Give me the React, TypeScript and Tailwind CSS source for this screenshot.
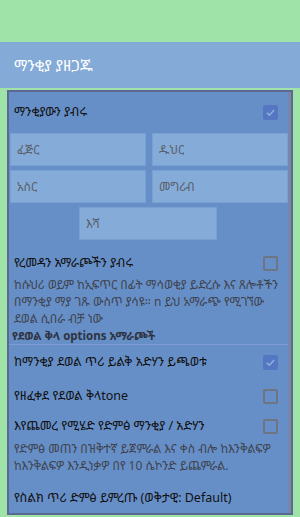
import React from "react";

const font = { fontFamily: '"Noto Sans Ethiopic", "Abyssinica SIL", "Noto Sans", "DejaVu Sans", sans-serif' };

function Check({ checked }: { checked: boolean }) {
  if (checked) {
    return (
      <div className="w-[15px] h-[15px] rounded-[2px] bg-[#5576c0] flex items-center justify-center shrink-0">
        <svg width="11" height="11" viewBox="0 0 12 12">
          <path d="M2 6.2 L4.8 9 L10 3.2" stroke="#8fb0e2" strokeWidth="1.6" fill="none" />
        </svg>
      </div>
    );
  }
  return <div className="w-[15px] h-[15px] rounded-[2px] border-2 border-[#6f7485] shrink-0" />;
}

function Row({ title, checked, h }: { title: string; checked?: boolean; h: string }) {
  return (
    <div className={`flex items-center justify-between shrink-0 pl-[5px] pr-[10px] ${h}`}>
      <span className="text-[12.5px] text-[#111]">{title}</span>
      {checked !== undefined && <Check checked={checked} />}
    </div>
  );
}

function Field({ label, w }: { label: string; w?: string }) {
  return (
    <div className={`h-[33px] bg-[#85acd9] border border-[#7aa0d2] flex items-center pl-[6px] text-[12px] text-[#5a5f6a] ${w ?? ""}`}>
      {label}
    </div>
  );
}

export default function App() {
  return (
    <div className="w-[300px] h-[517px] bg-[#a0e3a8] overflow-hidden" style={font}>
      <div className="h-[42px]" />
      <div className="h-[46px] bg-[#84aad7] flex items-center pl-[14px] text-white text-[15px]">ማንቂያ ያዘጋጁ</div>
      <div className="mt-[2px] ml-[7px] w-[286px] h-[425px] border-2 border-[#5b6894] bg-[#678fc7] flex">
        <div className="flex-1 flex flex-col overflow-hidden">
          <Row title="ማንቂያውን ያብሩ" checked={true} h="h-[41px]" />
          <div className="grid grid-cols-2 gap-x-[6px] gap-y-[4px] pl-[1px] shrink-0">
            <Field label="ፈጅር" />
            <Field label="ዱህር" />
            <Field label="አስር" />
            <Field label="መግሪብ" />
          </div>
          <div className="flex pl-[70px] mt-[4px] shrink-0">
            <Field label="እሻ" w="w-[138px]" />
          </div>
          <Row title="የረመዳን አማራጮችን ያብሩ" checked={false} h="h-[26px] mt-[10px]" />
          <div className="pl-[5px] text-[12px] leading-[17px] text-[#3e4450] shrink-0 h-[51px] whitespace-nowrap">
            ከሱህሪ ወይም ከኢፍጥር በፊት ማሳወቂያ ይድረሱ እና ጸሎቶችን
            <br />
            በማንቂያ ማያ ገጹ ውስጥ ያሳዩ። n ይህ አማራጭ የሚገኘው
            <br />
            ደወል ሲበራ ብቻ ነው
          </div>
          <div className="h-[17px] flex items-center pl-[3px] text-[11.5px] font-bold text-[#2d3340] shrink-0">የደወል ቅላ options አማራጮች</div>
          <div className="h-px bg-[#7d9dd2] shrink-0" />
          <Row title="ከማንቂያ ደወል ጥሪ ይልቅ አድሃን ይጫወቱ" checked={true} h="h-[34px]" />
          <Row title="የዘፈቀደ የደወል ቅላtone" checked={false} h="h-[34px]" />
          <Row title="እየጨመረ የሚሄድ የድምፅ ማንቂያ / አድሃን" checked={false} h="h-[27px]" />
          <div className="pl-[5px] text-[12px] leading-[17px] text-[#3e4450] shrink-0 h-[34px] whitespace-nowrap">
            የድምፅ መጠን በዝቅተኛ ይጀምራል እና ቀስ ብሎ ከእንቅልፍዎ
            <br />
            ከእንቅልፍዎ እንዲነቃዎ በየ 10 ሴኮንድ ይጨምራል.
          </div>
          <Row title="የስልክ ጥሪ ድምፅ ይምረጡ (ወቅታዊ: Default)" h="h-[40px] pt-[9px]" />
        </div>
        <div className="w-[3px] bg-[#7a86a8] h-full" />
      </div>
    </div>
  );
}
